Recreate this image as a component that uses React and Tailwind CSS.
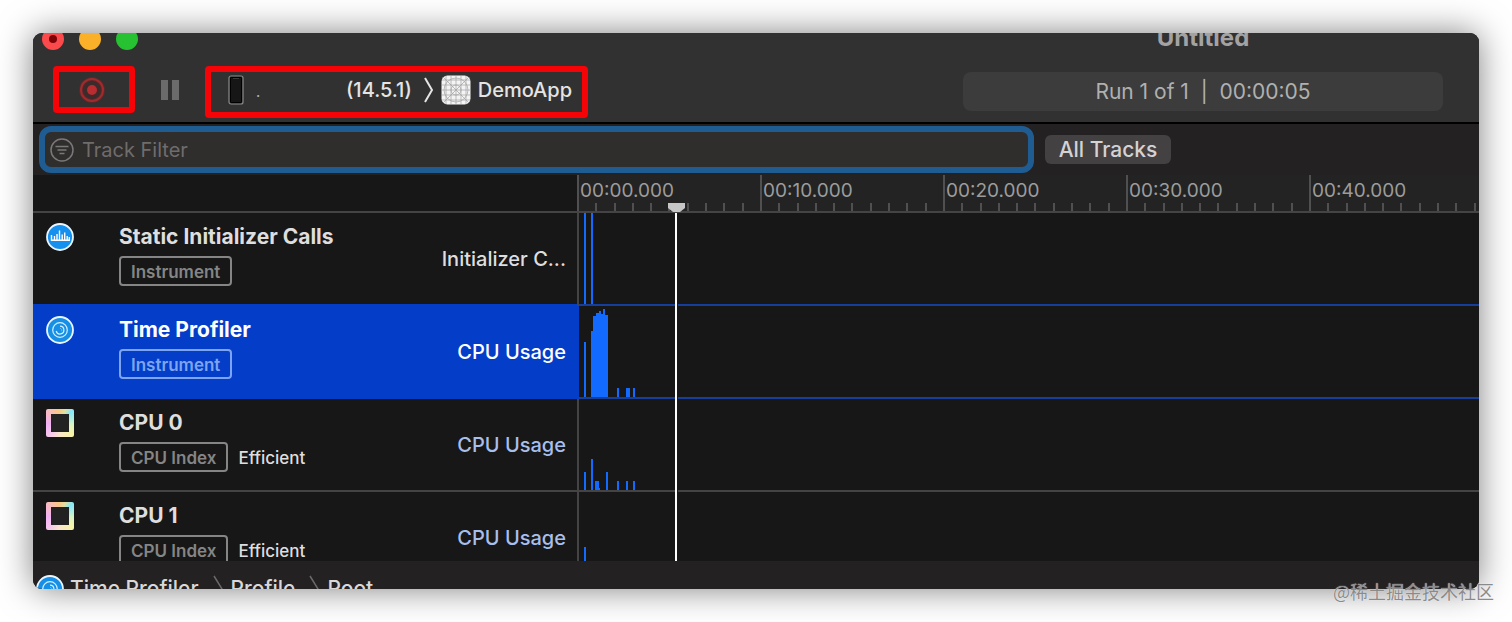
import { useState } from 'react';

const RULER_MARKS = ['00:00.000', '00:10.000', '00:20.000', '00:30.000', '00:40.000'];

// bars are [x, width, height], measured from the left and bottom of the lane
const TRACKS = [
  {
    name: 'Static Initializer Calls',
    badge: 'Instrument',
    metric: 'Initializer C...',
    icon: 'initializer',
    bars: [[5, 2, 91], [12, 2, 91]],
  },
  {
    name: 'Time Profiler',
    badge: 'Instrument',
    metric: 'CPU Usage',
    icon: 'profiler',
    bars: [
      [5, 2, 55], [12, 2, 66], [14, 3, 81], [17, 3, 84], [20, 2, 86], [22, 2, 83],
      [24, 2, 88], [26, 3, 82], [38, 2, 9], [47, 4, 9], [54, 2, 9],
    ],
  },
  {
    name: 'CPU 0',
    badge: 'CPU Index',
    note: 'Efficient',
    metric: 'CPU Usage',
    icon: 'cpu',
    bars: [
      [5, 2, 18], [12, 2, 31], [16, 4, 9], [20, 1, 2], [27, 2, 18],
      [38, 2, 9], [47, 2, 9], [54, 2, 9],
    ],
  },
  {
    name: 'CPU 1',
    badge: 'CPU Index',
    note: 'Efficient',
    metric: 'CPU Usage',
    icon: 'cpu',
    bars: [[5, 2, 36]],
  },
];

const InitializerIcon = () => (
  <svg viewBox="0 0 28 28" className="w-7 h-7 shrink-0">
    <circle cx="14" cy="14" r="13" fill="#1590ee" stroke="#eaf6ff" strokeWidth="1.8" />
    <path d="M5.500 12v5.500M8.500 13v4.500M11 11v6.500M13.500 7.500v10M16.200 11.500v6M18.700 9.500v8M21.200 13v4.500M23.300 14v4M4.800 17.300h19" stroke="#fff" strokeWidth="1.4" fill="none" />
  </svg>
);

const ProfilerIcon = () => (
  <svg viewBox="0 0 28 28" className="w-7 h-7 shrink-0">
    <circle cx="14" cy="14" r="13" fill="#1590e6" stroke="#eaf6ff" strokeWidth="1.8" />
    <circle cx="14" cy="14" r="7.300" fill="none" stroke="#d5efff" strokeWidth="1.2" />
    <path d="M14 10.200a3.900 3.900 0 1 1-3.800 4.800" fill="none" stroke="#d5efff" strokeWidth="1.2" />
    <path d="M14 12.300a2 2 0 0 1 1.500 3" fill="none" stroke="#7cc6f8" strokeWidth="0.8" />
  </svg>
);

const CpuIcon = () => (
  <div className="w-7 h-7 shrink-0 p-[5px] rounded-xs bg-[conic-gradient(from_45deg,#86e8fa,#d8f3c4_14%,#f8f3a8_25%,#fbe6cc_38%,#f6c4ee_50%,#f2b0f4_62%,#f7bcc4_74%,#fbc884_86%,#dfe0a4_94%,#86e8fa)]">
    <div className="w-full h-full bg-[#222222]"></div>
  </div>
);

const TrackIcon = ({ kind }) => {
  if (kind === 'initializer') return <InitializerIcon />;
  if (kind === 'profiler') return <ProfilerIcon />;
  return <CpuIcon />;
};

const AppIcon = () => (
  <svg viewBox="0 0 30 30" className="w-[30px] h-[30px] shrink-0">
    <rect x="0.5" y="0.5" width="29" height="29" rx="6" fill="#f4f4f4" />
    <g stroke="#a2a2a2" strokeWidth="0.7" fill="none">
      <path d="M5 1v28M10 1v28M15 1v28M20 1v28M25 1v28M1 5h28M1 10h28M1 15h28M1 20h28M1 25h28" />
      <path d="M2 2l26 26M28 2L2 28" />
      <circle cx="15" cy="15" r="5" />
      <circle cx="15" cy="15" r="12" />
    </g>
  </svg>
);

const Chevron = () => (
  <svg viewBox="0 0 10 26" className="w-[10px] h-[26px] shrink-0">
    <path d="M1 1l7 12-7 12" fill="none" stroke="currentColor" strokeWidth="2" />
  </svg>
);

const PathChevron = () => (
  <svg viewBox="0 0 10 28" className="w-[10px] h-7 shrink-0 ml-[14px] mr-2 text-[#6b696b]">
    <path d="M1 1l8 13-8 13" fill="none" stroke="currentColor" strokeWidth="1.5" />
  </svg>
);

const Toolbar = () => (
  <header className="bg-[#313131] h-[91px] border-b-2 border-black">
    <div className="flex items-end h-[17px] overflow-hidden pl-[9px] pr-9">
      <div className="flex gap-[15px]">
        <button aria-label="Close" className="w-[22px] h-[22px] rounded-full bg-[#fc4a4c] flex items-center justify-center">
          <span className="w-2 h-2 rounded-full bg-[#7d0307]"></span>
        </button>
        <button aria-label="Minimize" className="w-[22px] h-[22px] rounded-full bg-[#fbb02a]"></button>
        <button aria-label="Zoom" className="w-[22px] h-[22px] rounded-full bg-[#26c231]"></button>
      </div>
      <h1 className="ml-auto w-[480px] text-center text-2xl leading-6 font-bold text-[#a3a3a3]">Untitled</h1>
    </div>

    <div className="flex items-start gap-[26px] pl-5 pr-9 pt-4">
      <button aria-label="Record" className="w-[82px] h-[47px] border-[6px] border-[#f50306] rounded-sm flex items-center justify-center pr-1">
        <svg viewBox="0 0 28 28" className="w-7 h-7">
          <circle cx="14" cy="14" r="11" fill="#4a2426" stroke="#7d2427" strokeWidth="4" opacity="0.5" />
          <circle cx="14" cy="14" r="11" fill="none" stroke="#a12a2d" strokeWidth="2" />
          <circle cx="14" cy="14" r="5" fill="#b92c30" />
        </svg>
      </button>
      <button aria-label="Pause" className="w-[18px] h-[47px] flex items-center justify-between">
        <span className="w-[7px] h-5 bg-[#6b6b6b]"></span>
        <span className="w-[7px] h-5 bg-[#6b6b6b]"></span>
      </button>
      <div className="w-[383px] h-[52px] border-[6px] border-[#f50306] rounded-sm flex items-center pl-[17px] pb-1 text-xl font-medium text-[#e4e4e4]">
        <svg viewBox="0 0 16 30" className="w-4 h-[30px] shrink-0">
          <rect x="1" y="1" width="14" height="28" rx="2" fill="#161616" stroke="#8a8d88" strokeWidth="1.2" />
          <rect x="2.500" y="2.500" width="11" height="25" rx="1" fill="none" stroke="#000" />
          <path d="M5 3.500h6" stroke="#3a3a3a" />
        </svg>
        <span className="w-[102px] pl-3 pt-1 text-sm text-[#b0b0b0]">.</span>
        <span>(14.5.1)</span>
        <span className="ml-auto flex items-center gap-[7px] pr-[10px]">
          <Chevron />
          <AppIcon />
          <span>DemoApp</span>
        </span>
      </div>
      <div className="ml-auto mt-[6px] w-[480px] h-[39px] rounded-lg bg-[#3c3c3c] flex items-center justify-center text-[21px] text-[#b0b0b0] whitespace-pre">
        Run 1 of 1  |  00:00:05
      </div>
    </div>
  </header>
);

const FilterBar = () => {
  const [filter, setFilter] = useState('');

  return (
    <div className="bg-[#232122] h-[51px] flex items-center gap-[11px] pl-[6px] pr-[308px]">
      <label className="flex-1 h-[47px] flex items-center gap-2 border-[6px] border-[#1f5c92] rounded-xl bg-[#302d2d] pl-[5px]">
        <svg viewBox="0 0 24 24" className="w-6 h-6 shrink-0" fill="none" stroke="#7b7879" strokeWidth="1.500">
          <circle cx="12" cy="12" r="11" />
          <path d="M5.500 8.500h13M7.500 12h9M9.500 15.500h5" strokeWidth="1.600" />
        </svg>
        <input
          type="text"
          aria-label="Track Filter"
          placeholder="Track Filter"
          className="flex-1 bg-transparent text-xl text-[#dddddd] placeholder:text-[#6f6c6c] outline-none"
          value={filter}
          onChange={e => setFilter(e.target.value)}
        />
      </label>
      <button className="w-[126px] h-[29px] rounded-md bg-[#444142] text-[21px] leading-7 font-medium text-[#d4d2d3]">All Tracks</button>
    </div>
  );
};

const Ruler = () => (
  <div className="flex h-[38px] border-b-2 border-[#444444]">
    <div className="w-[544px] shrink-0 bg-[#171717]"></div>
    <div className="flex-1 flex overflow-hidden bg-[#232323]">
      {RULER_MARKS.map(mark => (
        <div key={mark} className="w-[183px] shrink-0 border-l-2 border-[#505050] flex flex-col justify-between">
          <span className="pl-px pt-1 text-[19px] leading-6 text-[#9c9c9c]">{mark}</span>
          <div className="grid grid-cols-10 h-2 -ml-[2px]">
            {Array.from({ length: 10 }, (_, i) => (
              <span key={i} className={i === 0 ? '' : 'border-l-2 border-[#505050]'}></span>
            ))}
          </div>
        </div>
      ))}
    </div>
  </div>
);

const Lane = ({ bars }) => (
  <svg className="block w-full h-[91px]">
    {bars.map(([x, w, h]) => (
      <rect key={x} x={x} y={91 - h} width={w} height={h} fill="#126aff" />
    ))}
  </svg>
);

const TrackRow = ({ track, selected, nextSelected, onSelect }) => {
  const isCpu = track.icon === 'cpu';
  const blueLine = selected || nextSelected;

  return (
    <div className="flex h-[93px]" onClick={onSelect}>
      <div className={`w-[544px] shrink-0 flex pl-[13px] pr-[11px] border-b-2 ${selected ? 'bg-[#033dc8]' : 'bg-[#171717]'} ${blueLine ? 'border-[#033dc8]' : 'border-[#444444]'}`}>
        <div className="w-[73px] shrink-0 pt-[10px]">
          <TrackIcon kind={track.icon} />
        </div>
        <div className="pt-3">
          <h2 className={`text-[21px] leading-6 font-bold ${selected ? 'text-white' : 'text-[#dedede]'}`}>{track.name}</h2>
          <div className="flex gap-[10px] mt-[7px]">
            <span className={`h-[30px] px-[10px] border-2 rounded leading-7 text-[17px] font-semibold ${selected ? 'border-[#7da5ef] text-[#7da5ef]' : 'border-[#858585] text-[#858585]'}`}>{track.badge}</span>
            {track.note && <span className="pt-[2px] leading-7 text-[17px] font-medium text-[#dedede]">{track.note}</span>}
          </div>
        </div>
        <span className={`ml-auto self-center text-xl font-medium ${selected ? 'text-white' : isCpu ? 'text-[#a8bfec]' : 'text-[#dedede]'}`}>{track.metric}</span>
      </div>
      <div className={`flex-1 border-l-2 bg-[#171717] ${selected ? 'border-[#033dc8]' : 'border-[#444444]'}`}>
        <Lane bars={track.bars} />
        <div className={`h-[2px] ${blueLine ? 'bg-[#163f9c]' : 'bg-[#444444]'}`}></div>
      </div>
    </div>
  );
};

const Footer = () => (
  <footer className="bg-[#232122] h-7 overflow-hidden pl-[3px] pt-[14px]">
    <nav className="flex items-start text-[21px] leading-7 font-medium text-[#d8d8d8]">
      <ProfilerIcon />
      <a href="#profiler" className="ml-[6px]">Time Profiler</a>
      <PathChevron />
      <a href="#profile">Profile</a>
      <PathChevron />
      <a href="#root">Root</a>
    </nav>
  </footer>
);

const App = () => {
  const [selected, setSelected] = useState(1);

  return (
    <div className="relative bg-white p-[33px] font-['Inter',sans-serif]">
      <div className="rounded-[9px] overflow-hidden bg-[#171717] shadow-[0_0_34px_rgba(0,0,0,0.5)]">
        <Toolbar />
        <FilterBar />
        <main className="relative">
          <Ruler />
          <div className="h-[348px] overflow-hidden">
            {TRACKS.map((track, i) => (
              <TrackRow
                key={track.name}
                track={track}
                selected={selected === i}
                nextSelected={selected === i + 1}
                onSelect={() => setSelected(i)}
              />
            ))}
          </div>
          {/* playhead */}
          <div className="absolute left-[635px] top-7 bottom-0 w-[17px] flex flex-col items-center pointer-events-none">
            <svg viewBox="0 0 17 10" className="w-[17px] h-[10px] shrink-0">
              <path d="M0 0h17v5l-5 4H5L0 5z" fill="#c6c6c6" />
            </svg>
            <div className="w-[3px] flex-1 bg-white border-r border-[#171717]"></div>
          </div>
        </main>
        <Footer />
      </div>
      <span className="absolute right-[18px] bottom-[19px] text-[18px] leading-6 text-[#8a8a8a] font-['Noto_Sans_CJK_SC',sans-serif] [text-shadow:0_0_1px_#ffffff]">@稀土掘金技术社区</span>
    </div>
  );
};

export default App;
